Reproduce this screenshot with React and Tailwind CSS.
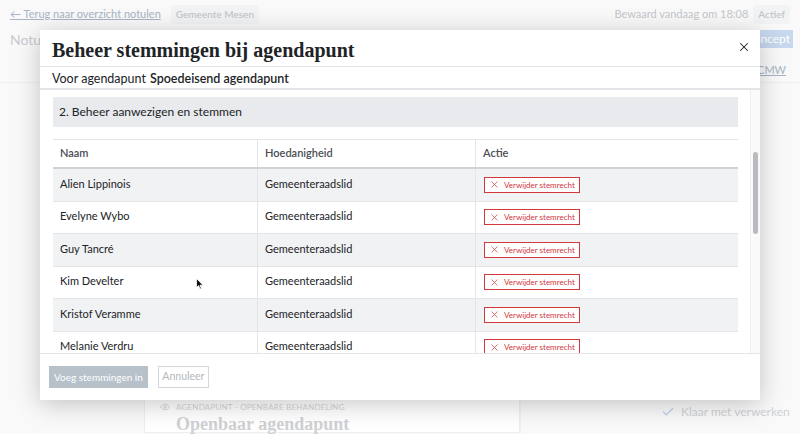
import { X, Check, Eye } from "lucide-react";

const rows = [
  { name: "Alien Lippinois", role: "Gemeenteraadslid" },
  { name: "Evelyne Wybo", role: "Gemeenteraadslid" },
  { name: "Guy Tancré", role: "Gemeenteraadslid" },
  { name: "Kim Develter", role: "Gemeenteraadslid" },
  { name: "Kristof Veramme", role: "Gemeenteraadslid" },
  { name: "Melanie Verdru", role: "Gemeenteraadslid" },
];

const Background = () => {
  return (
    <div className="absolute inset-0 bg-[#f9f9fa]">
      <div className="flex items-center h-[28px] px-[10px]">
        <a className="text-[11px] text-[#a7b4c6] underline">← Terug naar overzicht notulen</a>
        <span className="ml-[10px] px-[5px] py-[2px] text-[10px] font-semibold text-[#c4c7cb] bg-[#f2f3f4] rounded-sm">
          Gemeente Mesen
        </span>
        <span className="ml-auto text-[11px] text-[#c4c7cb]">Bewaard vandaag om 18:08</span>
        <span className="ml-[5px] px-[5px] py-[2px] text-[10px] font-semibold text-[#c4c7cb] bg-[#f2f3f4] rounded-sm">
          Actief
        </span>
      </div>
      <div className="flex items-center h-[22px] pl-[10px] pr-[7px]">
        <span className="text-[14px] text-[#c9cbce]">Notulen</span>
        <div className="ml-auto w-[115px] h-[18px] border border-[#eceef0] bg-white" />
        <div className="ml-[10px] w-[73px] h-[18px] bg-[#c6d7ee] text-white text-[12px] flex items-center justify-end pr-[3px]">
          concept
        </div>
      </div>
      <div className="flex justify-end pr-[14px] pt-[12px] h-[33px] border-b border-[#eff0f1]">
        <a className="text-[11px] text-[#a7b4c6] underline">OCMW</a>
      </div>
      <div className="flex h-[350px]">
        <div className="w-[144px]" />
        <div className="w-[376px] mt-[312px] border border-[#eeeff0] bg-white pl-[15px] pt-[5px]">
          <div className="flex items-center gap-[6px] text-[8px] tracking-wide text-[#d3d5d8]">
            <Eye size={10} />
            <span>AGENDAPUNT - OPENBARE BEHANDELING</span>
          </div>
          <div className="pl-[16px] pt-[1px] text-[18px] font-bold text-[#cfd1d4] font-['Liberation_Serif',serif] leading-[20px]">
            Openbaar agendapunt
          </div>
        </div>
        <div className="flex-1 border-l border-[#f1f2f3] pt-[320px] pl-[140px]">
          <div className="flex items-center gap-[6px] text-[12px] text-[#cfd1d4]">
            <Check size={14} className="text-[#b8cce8]" />
            <span>Klaar met verwerken</span>
          </div>
        </div>
      </div>
    </div>
  );
};

const Cursor = () => (
  <svg className="absolute left-[196px] top-[278px]" width="8" height="12" viewBox="0 0 8 12">
    <path d="M0.5 0.5 L0.5 9.5 L2.6 7.6 L4 11 L5.4 10.4 L4 7.2 L7 7.2 Z" fill="#111" stroke="#fff" strokeWidth="0.8" />
  </svg>
);

const App = () => {
  return (
    <div className="relative w-[800px] h-[434px] overflow-hidden font-['Lato',sans-serif] text-[#212326]">
      <Background />
      <div className="absolute inset-0 flex justify-center pt-[30px]">
        <div className="w-[720px] h-[370px] bg-white shadow-[0_4px_24px_rgba(0,0,0,0.22)] flex flex-col">
          <div className="flex items-center h-[37px] pl-[12px] pr-[9px] pt-[3px] border-b border-[#e3e5e8]">
            <h1 className="text-[20px] font-bold font-['Liberation_Serif',serif] text-[#212326] leading-none">
              Beheer stemmingen bij agendapunt
            </h1>
            <X size={14} strokeWidth={1.8} className="ml-auto mb-[6px] text-[#212326]" />
          </div>
          <div className="flex items-center h-[23px] pl-[12px] pt-[3px] border-b-2 border-[#e3e5e8] text-[12.5px]">
            <span>Voor agendapunt</span>
            <span className="ml-[4px] font-semibold">Spoedeisend agendapunt</span>
          </div>
          <div className="flex flex-1 min-h-0">
            <div className="flex-1 overflow-hidden pl-[13px] pr-[12px] pt-[7px]">
              <div className="h-[30px] bg-[#e8eaed] flex items-center pl-[6px] text-[12px]">
                2. Beheer aanwezigen en stemmen
              </div>
              <div className="mt-[12px] border-t border-[#e3e5e8]">
                <div className="flex h-[29px] border-b-2 border-[#cfd2d6] text-[11px] font-semibold text-[#4a4e54]">
                  <div className="w-[205px] flex items-center pl-[7px] border-r border-[#e3e5e8]">Naam</div>
                  <div className="w-[218px] flex items-center pl-[7px] border-r border-[#e3e5e8]">Hoedanigheid</div>
                  <div className="flex-1 flex items-center pl-[7px]">Actie</div>
                </div>
                {rows.map((row, i) => (
                  <div
                    key={row.name}
                    className={`flex h-[32.5px] border-b border-[#e3e5e8] text-[11px] ${i % 2 === 0 ? "bg-[#f1f2f4]" : "bg-white"}`}
                  >
                    <div className="w-[205px] flex items-center pl-[7px] pb-[2px] border-r border-[#e3e5e8]">{row.name}</div>
                    <div className="w-[218px] flex items-center pl-[7px] pb-[2px] border-r border-[#e3e5e8]">{row.role}</div>
                    <div className="flex-1 flex items-center pl-[8px]">
                      <span className="flex items-center gap-[4px] h-[16px] pl-[4px] pr-[4px] border-[1.5px] border-[#d2373c] bg-white text-[#d2373c] text-[8px] whitespace-nowrap">
                        <X size={11} strokeWidth={1.5} />
                        Verwijder stemrecht
                      </span>
                    </div>
                  </div>
                ))}
              </div>
            </div>
            <div className="w-[10px] bg-[#fafafa] border-l border-[#eeeff0] pt-[62px] flex justify-center">
              <div className="w-[5px] h-[82px] rounded-full bg-[#b9bbbe]" />
            </div>
          </div>
          <div className="flex items-center gap-[10px] h-[47px] pl-[9px] border-t border-[#e3e5e8]">
            <button className="h-[22px] px-[5px] bg-[#b6c1ca] text-white text-[10px] whitespace-nowrap">Voeg stemmingen in</button>
            <button className="h-[22px] w-[51px] border border-[#d4d8dc] text-[#b3b8be] text-[10.5px]">Annuleer</button>
          </div>
        </div>
      </div>
      <Cursor />
    </div>
  );
};

export default App;
